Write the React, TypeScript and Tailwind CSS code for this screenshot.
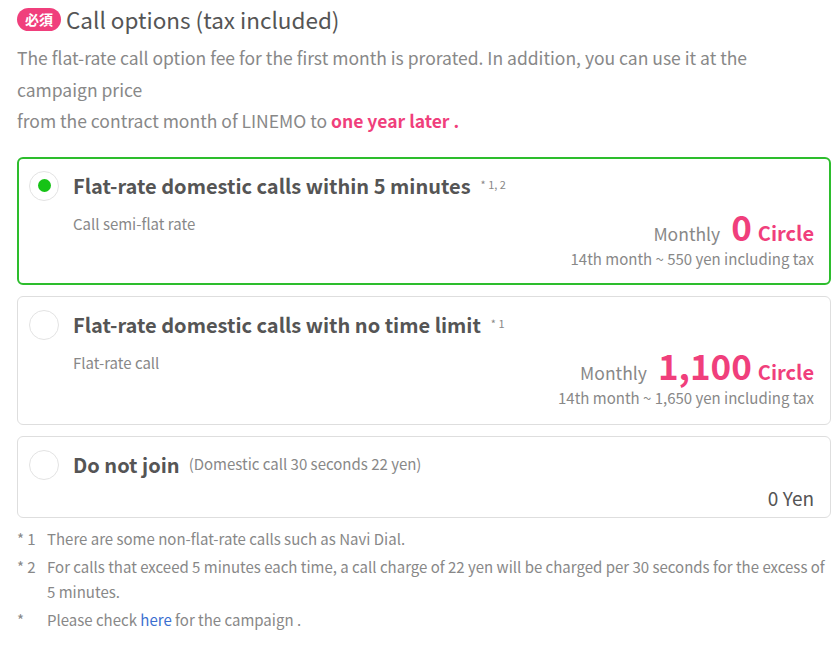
import React from "react";

const font = { fontFamily: '"Noto Sans CJK JP", "Noto Sans", sans-serif' };

function Radio({ checked }: { checked?: boolean }) {
  return (
    <span className="w-[30px] h-[30px] shrink-0 rounded-full border border-[#e3e3e3] bg-white flex items-center justify-center">
      {checked && <span className="w-[13px] h-[13px] rounded-full bg-[#16c316]" />}
    </span>
  );
}

function Price({ amount, note }: { amount: string; note: string }) {
  return (
    <div className="text-right">
      <div className="flex items-baseline justify-end text-[#f03f7c]">
        <span className="text-[17.5px] text-[#888] mr-[11px]">Monthly</span>
        <span className="text-[35px] font-bold leading-[40px] mr-[6px]">{amount}</span>
        <span className="text-[20px] font-bold">Circle</span>
      </div>
      <div className="text-[15px] text-[#888] leading-[22px]">{note}</div>
    </div>
  );
}

function OptionCard({
  checked,
  title,
  sup,
  sub,
  amount,
  note,
}: {
  checked?: boolean;
  title: string;
  sup: string;
  sub: string;
  amount: string;
  note: string;
}) {
  return (
    <div
      className={
        checked
          ? "border-2 border-[#2dbd2d] rounded-[6px] pl-[10px] pr-[15px] pt-[12px] pb-[13px]"
          : "border border-[#dedede] rounded-[6px] pl-[11px] pr-[16px] pt-[13px] pb-[15px]"
      }
    >
      <div className="flex items-center gap-[15px]">
        <Radio checked={checked} />
        <span className="text-[20px] font-bold text-[#555] -ml-[1px]">{title}</span>
        <span className="text-[11px] text-[#888] -ml-[5px] -mt-[2px]">{sup}</span>
      </div>
      <div className="flex justify-between items-start mt-[12px]">
        <span className="ml-[44px] text-[15px] text-[#888] leading-[22px]">{sub}</span>
        <div className="-mt-[7px]">
          <Price amount={amount} note={note} />
        </div>
      </div>
    </div>
  );
}

export default function App() {
  return (
    <div className="bg-white w-[840px] h-[646px] pl-[17px] pr-[9px] pt-[7px] text-[#555]" style={font}>
      <div className="flex items-center gap-[5px]">
        <span className="bg-[#f03f7c] text-white text-[14px] font-bold rounded-full px-[8px] h-[23px] leading-[23px]">
          必須
        </span>
        <h1 className="text-[22.5px] text-[#555] leading-[24px]">Call options (tax included)</h1>
      </div>

      <p className="text-[17.5px] text-[#888] leading-[31.5px] mt-[11px] w-[790px]">
        The flat-rate call option fee for the first month is prorated. In addition, you can use it at the campaign price
        <br />
        from the contract month of LINEMO to <span className="text-[#f03f7c] font-bold">one year later .</span>
      </p>

      <div className="flex flex-col gap-[11px] mt-[20px]">
        <OptionCard
          checked
          title="Flat-rate domestic calls within 5 minutes"
          sup="* 1, 2"
          sub="Call semi-flat rate"
          amount="0"
          note="14th month ~ 550 yen including tax"
        />
        <OptionCard
          title="Flat-rate domestic calls with no time limit"
          sup="* 1"
          sub="Flat-rate call"
          amount="1,100"
          note="14th month ~ 1,650 yen including tax"
        />
        <div className="border border-[#dedede] rounded-[6px] pl-[11px] pr-[16px] pt-[13px] pb-[5px]">
          <div className="flex items-center gap-[15px]">
            <Radio />
            <span className="text-[20px] font-bold text-[#555] -ml-[1px]">Do not join</span>
            <span className="text-[15px] text-[#888] -ml-[6px]">(Domestic call 30 seconds 22 yen)</span>
          </div>
          <div className="text-right text-[19px] text-[#555] mt-[4px]">0 Yen</div>
        </div>
      </div>

      <ul className="mt-[8px] text-[15px] text-[#888] leading-[25px] flex flex-col gap-[3px]">
        <li className="flex">
          <span className="w-[30px] shrink-0">* 1</span>
          <span>There are some non-flat-rate calls such as Navi Dial.</span>
        </li>
        <li className="flex">
          <span className="w-[30px] shrink-0">* 2</span>
          <span>
            For calls that exceed 5 minutes each time, a call charge of 22 yen will be charged per 30 seconds for the excess of 5 minutes.
          </span>
        </li>
        <li className="flex">
          <span className="w-[30px] shrink-0">*</span>
          <span>
            Please check <a className="text-[#3b6fd0]">here</a> for the campaign .
          </span>
        </li>
      </ul>
    </div>
  );
}
